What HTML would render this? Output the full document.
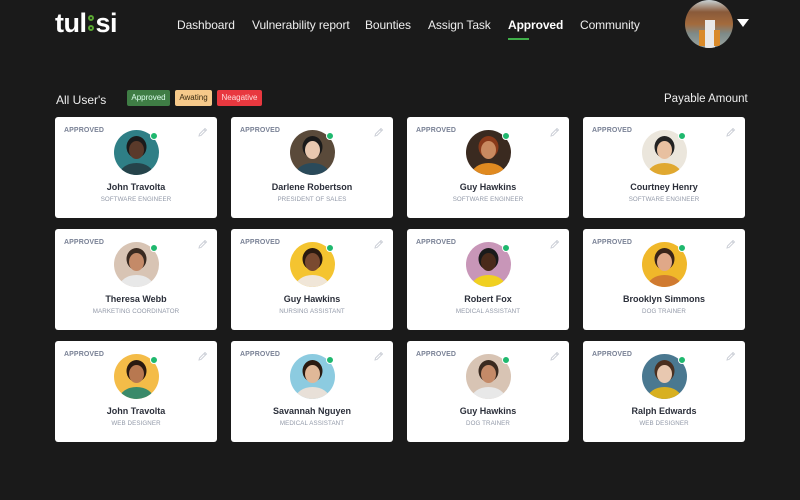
<!DOCTYPE html>
<html><head><meta charset="utf-8"><style>
*{margin:0;padding:0;box-sizing:border-box}
body{width:800px;height:500px;background:#1a1a1a;font-family:"Liberation Sans",sans-serif;position:relative;overflow:hidden;color:#fff}
.a{position:absolute}
.logo{left:55px;top:8px;font-size:27px;font-weight:bold;letter-spacing:-0.5px;color:#fff}
.nav{top:18px;font-size:12px;color:#eee;letter-spacing:-0.1px}
.card{position:absolute;width:162px;height:101px;background:#fff;border-radius:3px}
.st{position:absolute;left:9px;top:10px;font-size:7px;font-weight:bold;color:#7a8296;letter-spacing:.1px}
.pen{position:absolute;right:9px;top:8px}
.av{position:absolute;left:59px;top:13px;width:45px;height:45px;border-radius:50%;overflow:hidden}
.dot{position:absolute;left:96px;top:16px;width:6px;height:6px;border-radius:50%;background:#1fb86e;border:1px solid #fff;box-sizing:content-box;margin:-1px}
.nm{position:absolute;left:0;width:100%;top:65px;text-align:center;font-size:9px;font-weight:bold;color:#2b2f3a}
.rl{position:absolute;left:0;width:100%;top:79px;text-align:center;font-size:6.2px;color:#9299a8;letter-spacing:.1px}
.tag{position:absolute;top:90px;height:16px;font-size:8px;line-height:16px;text-align:center;border-radius:2px}
</style></head><body>
<div class="a logo">tul<span style="display:inline-block;width:9px;position:relative;height:20px;vertical-align:-2px"><span style="position:absolute;left:1px;top:1px;width:6px;height:6px;border:2px solid #5aa832;border-radius:50%"></span><span style="position:absolute;left:1px;top:11px;width:6px;height:6px;border:2px solid #5aa832;border-radius:50%"></span></span>si</div>
<div class="a nav" style="left:177px">Dashboard</div>
<div class="a nav" style="left:252px">Vulnerability report</div>
<div class="a nav" style="left:365px">Bounties</div>
<div class="a nav" style="left:428px">Assign Task</div>
<div class="a nav" style="left:508px;font-weight:bold;color:#fff">Approved</div>
<div class="a" style="left:508px;top:38px;width:21px;height:2px;background:#3fae49"></div>
<div class="a nav" style="left:580px">Community</div>
<div class="a" style="left:685px;top:0;width:48px;height:48px;border-radius:50%;overflow:hidden;background:linear-gradient(#c9d3d6 0,#8a5a3a 25%,#a36a3c 50%,#7d8a88 70%,#9aa3a0 100%)"><div style="position:absolute;left:20px;top:20px;width:10px;height:28px;background:#e8e8e8"></div><div style="position:absolute;left:14px;top:30px;width:6px;height:16px;background:#d98a2a"></div><div style="position:absolute;left:29px;top:30px;width:6px;height:16px;background:#d98a2a"></div></div>
<div class="a" style="left:737px;top:19px;width:0;height:0;border-left:6px solid transparent;border-right:6px solid transparent;border-top:8px solid #fff"></div>
<div class="a" style="left:56px;top:93px;font-size:12px;color:#eee">All User's</div>
<div class="tag" style="left:127px;width:43px;background:#3f7d45;color:#dfe;">Approved</div>
<div class="tag" style="left:175px;width:37px;background:#f6c98a;color:#3a2a10">Awating</div>
<div class="tag" style="left:217px;width:45px;background:#e8383f;color:#fdd">Neagative</div>
<div class="a" style="left:664px;top:93px;font-size:11.5px;color:#eee">Payable Amount</div>
<div id="g"></div>
<script>
var d=[
["John Travolta","SOFTWARE ENGINEER","#2f7f86","#1b1b1b","#5a3a2a","#25434a"],
["Darlene Robertson","PRESIDENT OF SALES","#5a4a3a","#1a1a1a","#e8c8b0","#2a4a5a"],
["Guy Hawkins","SOFTWARE ENGINEER","#3a2a20","#8a3a1a","#c98a60","#e08a20"],
["Courtney Henry","SOFTWARE ENGINEER","#ebe6dc","#222","#e8c0a0","#e0a830"],
["Theresa Webb","MARKETING COORDINATOR","#d8c4b4","#3a2a20","#c48a68","#e8e8e8"],
["Guy Hawkins","NURSING ASSISTANT","#f4c430","#2a1a10","#7a4a30","#f0e6d8"],
["Robert Fox","MEDICAL ASSISTANT","#c896b8","#1a1a1a","#4a2a1a","#f0d020"],
["Brooklyn Simmons","DOG TRAINER","#f0b82a","#3a2418","#e0a888","#d07a30"],
["John Travolta","WEB DESIGNER","#f4bc48","#2a1a10","#b87850","#3a8a6a"],
["Savannah Nguyen","MEDICAL ASSISTANT","#8ccbe0","#2a1a10","#e0b898","#e8e0d8"],
["Guy Hawkins","DOG TRAINER","#d8c4b4","#3a2a20","#c48a68","#e8e8e8"],
["Ralph Edwards","WEB DESIGNER","#4a7890","#4a3020","#e8c8b0","#d8b020"]];
var h="",xs=[55,231,407,583],ys=[117,229,341];
var pen='<svg width="11" height="11" viewBox="0 0 11 11"><path d="M2 9 L2.5 7 L8 1.5 L9.5 3 L4 8.5 Z M7 2.5 L8.5 4" fill="none" stroke="#c8ccd4" stroke-width="0.9"/></svg>';
for(var i=0;i<12;i++){var p=d[i];
h+='<div class="card" style="left:'+xs[i%4]+'px;top:'+ys[Math.floor(i/4)]+'px"><div class="st">APPROVED</div><div class="pen">'+pen+'</div>'+
'<div class="av"><svg width="45" height="45" viewBox="0 0 45 45"><rect width="45" height="45" fill="'+p[2]+'"/><ellipse cx="22.5" cy="17" rx="10" ry="11" fill="'+p[3]+'"/><ellipse cx="22.5" cy="20" rx="7.5" ry="9" fill="'+p[4]+'"/><ellipse cx="22.5" cy="45" rx="17" ry="12" fill="'+p[5]+'"/></svg></div><div class="dot"></div>'+
'<div class="nm">'+p[0]+'</div><div class="rl">'+p[1]+'</div></div>';}
document.getElementById("g").innerHTML=h;
</script>
</body></html>
